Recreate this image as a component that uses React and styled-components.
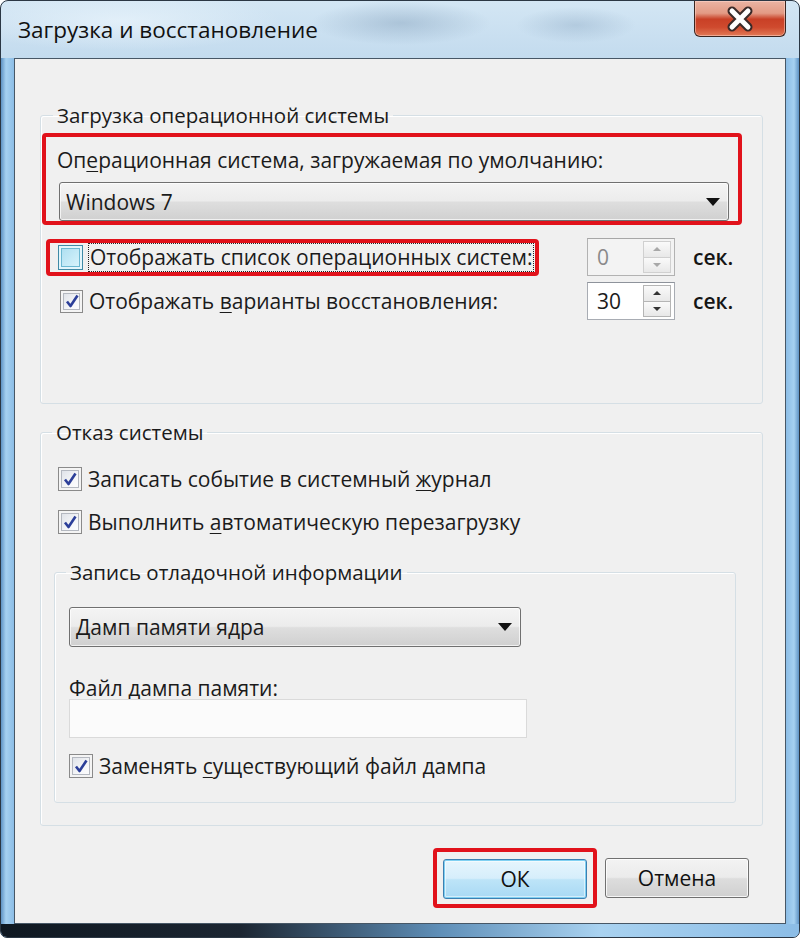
import React from "react";
import styled, { createGlobalStyle } from "styled-components";

const GlobalStyle = createGlobalStyle`
  html, body {
    margin: 0;
    padding: 0;
    background: #ffffff;
  }
  body {
    font-family: "Open Sans", "Liberation Sans", sans-serif;
    color: #1b1b1b;
  }
`;

const Window = styled.div`
  width: 800px;
  height: 938px;
  box-sizing: border-box;
  border: 1px solid #2b3744;
  border-radius: 8px 8px 7px 7px;
  overflow: hidden;
  display: flex;
  flex-direction: column;
  background:
    radial-gradient(ellipse 90px 22px at 400px 22px, rgba(110, 140, 170, 0.35), transparent),
    radial-gradient(ellipse 60px 18px at 575px 24px, rgba(120, 150, 180, 0.3), transparent),
    radial-gradient(ellipse 160px 30px at 120px 20px, rgba(235, 245, 252, 0.7), transparent),
    linear-gradient(to bottom, #d3e6f4 0, #c3dbee 57px, transparent 57px),
    linear-gradient(to right, #5f93c4 0, #a6d1f1 5px, #8cbde6 13px, #8cbde6 785px, #a6d1f1 793px, #5f93c4 100%);
`;

const TitleBar = styled.div`
  height: 57px;
  flex-shrink: 0;
  display: flex;
  justify-content: space-between;
  align-items: flex-start;
  padding-left: 17px;
`;

const Title = styled.div`
  margin-top: 18px;
  font-size: 22.5px;
  line-height: 22px;
  color: #111;
`;

const CloseButton = styled.div`
  width: 92px;
  height: 36px;
  margin-right: 13px;
  box-sizing: border-box;
  border: 1px solid #3b2520;
  border-top: none;
  border-radius: 0 0 6px 6px;
  display: flex;
  align-items: center;
  justify-content: center;
  background: linear-gradient(
    to bottom,
    #eab4a3 0%,
    #e39a84 35%,
    #c94026 52%,
    #cf4a2e 75%,
    #e27a56 100%
  );
  box-shadow: inset 0 0 0 1px rgba(255, 220, 210, 0.5);
`;

const Client = styled.div`
  height: 866px;
  margin: 0 13px;
  box-sizing: border-box;
  border: 1px solid #475766;
  background: #f0f0f0;
  padding: 42px 22px 0 25px;
  display: flex;
  flex-direction: column;
`;

const BottomEdge = styled.div`
  height: 13px;
  flex-shrink: 0;
  background: linear-gradient(
    to right,
    #0f1821 0,
    #1c2632 30%,
    #5f8fb8 55%,
    #a9d2f0 75%,
    #8cbde6 100%
  );
`;

const Group = styled.fieldset`
  margin: ${(p) => p.$margin || "0"};
  padding: ${(p) => p.$padding || "0"};
  min-width: 0;
  border: 1px solid #d5dfe5;
  border-radius: 3px;
  box-shadow: inset 1px 1px 0 #ffffff;
  display: flex;
  flex-direction: column;
  align-items: flex-start;
`;

const Legend = styled.legend`
  margin-left: ${(p) => p.$offset || 12}px;
  padding: 0 4px;
  font-size: 20.5px;
  line-height: 28px;
  color: #1b1b1b;
`;

const Text = styled.span`
  font-size: 21px;
  line-height: 28px;
  white-space: nowrap;
`;

const Key = styled.u`
  text-decoration-thickness: 1px;
  text-underline-offset: 3px;
`;

const Highlight = styled.div`
  box-sizing: border-box;
  border: 4px solid #e1121b;
  border-radius: 4px;
  width: ${(p) => p.$width}px;
  margin: ${(p) => p.$margin || "0"};
  padding: ${(p) => p.$padding || "0"};
  display: flex;
  flex-direction: ${(p) => (p.$column ? "column" : "row")};
  align-items: ${(p) => (p.$column ? "flex-start" : "center")};
`;

const Combo = styled.div`
  box-sizing: border-box;
  width: ${(p) => p.$width}px;
  height: ${(p) => p.$height}px;
  margin: ${(p) => p.$margin || "0"};
  border: 1px solid #707070;
  border-radius: 3px;
  padding: 0 8px 0 6px;
  display: flex;
  align-items: center;
  justify-content: space-between;
  background: linear-gradient(
    to bottom,
    #f4f4f4 0%,
    #ececec 48%,
    #dedede 52%,
    #d0d0d0 100%
  );
  box-shadow: inset 0 0 0 1px rgba(255, 255, 255, 0.7);
`;

const ComboArrow = styled.span`
  width: 0;
  height: 0;
  border-left: 7px solid transparent;
  border-right: 7px solid transparent;
  border-top: 8px solid #111;
`;

const Box = styled.span`
  box-sizing: border-box;
  flex-shrink: 0;
  width: ${(p) => p.$size || 24}px;
  height: ${(p) => p.$size || 24}px;
  margin-left: ${(p) => p.$left || 0}px;
  display: flex;
  align-items: center;
  justify-content: center;
  border: 1px solid ${(p) => (p.$checked ? "#8a8a8a" : "#3f8aa6")};
  background: ${(p) =>
    p.$checked
      ? "linear-gradient(135deg, #d9dde4 0%, #f6f7f9 60%, #ffffff 100%)"
      : "linear-gradient(135deg, #a9dcef 0%, #c8ecf8 60%, #dff5fc 100%)"};
  box-shadow: ${(p) =>
    p.$checked
      ? "inset 0 0 0 2px #f4f4f4, inset 0 0 0 3px #b4b8c0"
      : "inset 0 0 0 2px #e3f6fc, inset 0 0 0 3px #6cb8d2"};
`;

const FocusText = styled(Text)`
  margin-left: 5px;
  padding: 0 1px;
  border: 1px dotted #222;
  line-height: 27px;
`;

const CheckLabel = styled(Text)`
  margin-left: ${(p) => p.$gap || 6}px;
`;

const TimerRow = styled.div`
  display: grid;
  grid-template-columns: 546px 88px auto;
  align-items: center;
  height: ${(p) => p.$height}px;
  margin-top: ${(p) => p.$top || 0}px;
`;

const CheckRow = styled.div`
  display: flex;
  align-items: center;
  height: ${(p) => p.$height || 36}px;
  margin-top: ${(p) => p.$top || 0}px;
  padding-left: ${(p) => p.$left || 0}px;
`;

const Spinner = styled.div`
  box-sizing: border-box;
  width: 88px;
  height: 38px;
  border: 1px solid ${(p) => (p.$disabled ? "#b2b2b2" : "#a8acb3")};
  border-top-color: ${(p) => (p.$disabled ? "#a7a7a7" : "#8e939b")};
  background: ${(p) => (p.$disabled ? "#f3f3f3" : "#ffffff")};
  display: flex;
  align-items: stretch;
  margin-left: ${(p) => p.$left || 0}px;
`;

const SpinValue = styled.span`
  flex: 1;
  padding-left: 9px;
  font-size: 21px;
  line-height: 36px;
  color: ${(p) => (p.$disabled ? "#8a8a8a" : "#1b1b1b")};
`;

const SpinButtons = styled.div`
  width: 28px;
  margin: 2px 3px 2px 0;
  display: flex;
  flex-direction: column;
`;

const SpinHalf = styled.div`
  flex: 1;
  box-sizing: border-box;
  border: 1px solid ${(p) => (p.$disabled ? "#d0d0d0" : "#b5b5b5")};
  border-top: ${(p) => (p.$down ? "none" : undefined)};
  background: linear-gradient(to bottom, #fafafa, #e8e8e8);
  display: flex;
  align-items: center;
  justify-content: center;
`;

const SpinArrow = styled.span`
  width: 0;
  height: 0;
  border-left: 4px solid transparent;
  border-right: 4px solid transparent;
  ${(p) =>
    p.$down
      ? `border-top: 4px solid ${p.$disabled ? "#a8a8a8" : "#333"};`
      : `border-bottom: 4px solid ${p.$disabled ? "#a8a8a8" : "#333"};`}
`;

const Unit = styled(Text)`
  margin-left: 18px;
  font-weight: 600;
  color: #151515;
`;

const FieldLabel = styled.div`
  margin: 30px 0 0 14px;
  font-size: 21px;
  line-height: 22px;
`;

const FieldInput = styled.div`
  box-sizing: border-box;
  width: 458px;
  height: 39px;
  margin-left: 14px;
  border: 1px solid #dadada;
  background: #fbfbfb;
`;

const ButtonRow = styled.div`
  display: flex;
  justify-content: flex-end;
  align-items: center;
  gap: 8px;
  margin-top: 22px;
  padding-right: 14px;
`;

const Button = styled.button`
  box-sizing: border-box;
  width: 144px;
  height: 40px;
  padding: 0;
  font-family: inherit;
  font-size: 21px;
  color: #111;
  border-radius: 3px;
  border: 1px solid ${(p) => (p.$primary ? "#3c7fb1" : "#707070")};
  background: ${(p) =>
    p.$primary
      ? "linear-gradient(to bottom, #e6f5fd 0%, #d6eefb 48%, #bde4f8 52%, #a8d9f4 100%)"
      : "linear-gradient(to bottom, #f3f3f3 0%, #ebebeb 48%, #dddddd 52%, #d0d0d0 100%)"};
  box-shadow: ${(p) =>
    p.$primary
      ? "inset 0 0 0 1px #7fd0f2, inset 0 0 0 2px rgba(255,255,255,0.5)"
      : "inset 0 0 0 1px rgba(255,255,255,0.8)"};
`;

const Check = ({ checked, size, left }) => (
  <Box $checked={checked} $size={size} $left={left}>
    {checked && (
      <svg width="16" height="16" viewBox="0 0 16 16">
        <path
          d="M3 8.5 L6.5 13 L13.5 2.5"
          fill="none"
          stroke="#2c3f99"
          strokeWidth="2.6"
          strokeLinejoin="round"
        />
      </svg>
    )}
  </Box>
);

const Spin = ({ value, disabled }) => (
  <Spinner $disabled={disabled}>
    <SpinValue $disabled={disabled}>{value}</SpinValue>
    <SpinButtons>
      <SpinHalf $disabled={disabled}>
        <SpinArrow $disabled={disabled} />
      </SpinHalf>
      <SpinHalf $disabled={disabled} $down>
        <SpinArrow $disabled={disabled} $down />
      </SpinHalf>
    </SpinButtons>
  </Spinner>
);

const App = () => {
  return (
    <>
      <GlobalStyle />
      <Window>
        <TitleBar>
          <Title>Загрузка и восстановление</Title>
          <CloseButton>
            <svg width="32" height="26" viewBox="0 0 32 26">
              <path
                d="M8 5 L24 21 M24 5 L8 21"
                stroke="#3a2a28"
                strokeWidth="9"
                strokeLinecap="round"
              />
              <path
                d="M8 5 L24 21 M24 5 L8 21"
                stroke="#ffffff"
                strokeWidth="5"
                strokeLinecap="round"
              />
            </svg>
          </CloseButton>
        </TitleBar>

        <Client>
          <Group $padding="0 0 82px 0">
            <Legend>Загрузка операционной системы</Legend>
            <Highlight $width={700} $margin="4px 0 0 1px" $padding="9px 9px 0 11px" $column>
              <Text>
                Оп<Key>е</Key>рационная система, загружаемая по умолчанию:
              </Text>
              <Combo $width={670} $height={39} $margin="8px 0 0 2px">
                <Text>Windows 7</Text>
                <ComboArrow />
              </Combo>
            </Highlight>

            <TimerRow $height={48} $top={8}>
              <Highlight $width={493} $margin="0 0 0 5px" $padding="0 0 0 8px">
                <Box $checked={false} $size={25} />
                <FocusText>Отображать список операционных систем:</FocusText>
              </Highlight>
              <Spin value="0" disabled />
              <Unit>сек.</Unit>
            </TimerRow>

            <TimerRow $height={40}>
              <CheckRow $height={40} $left={19}>
                <Check checked size={23} />
                <CheckLabel>
                  Отображать <Key>в</Key>арианты восстановления:
                </CheckLabel>
              </CheckRow>
              <Spin value="30" />
              <Unit>сек.</Unit>
            </TimerRow>
          </Group>

          <Group $margin="14px 0 0 0" $padding="0 0 22px 0">
            <Legend $offset={11}>Отказ системы</Legend>
            <CheckRow $top={15} $left={17}>
              <Check checked size={24} />
              <CheckLabel>
                Записать событие в системный <Key>ж</Key>урнал
              </CheckLabel>
            </CheckRow>
            <CheckRow $top={7} $left={17}>
              <Check checked size={24} />
              <CheckLabel>
                Выполнить <Key>а</Key>втоматическую перезагрузку
              </CheckLabel>
            </CheckRow>

            <Group $margin="18px 0 0 13px" $padding="0 0 21px 0" style={{ width: 680 }}>
              <Legend $offset={11}>Запись отладочной информации</Legend>
              <Combo $width={452} $height={40} $margin="21px 0 0 14px">
                <Text>Дамп памяти ядра</Text>
                <ComboArrow />
              </Combo>
              <FieldLabel>
                <Key>Ф</Key>айл дампа памяти:
              </FieldLabel>
              <FieldInput />
              <CheckRow $height={30} $top={13} $left={14}>
                <Check checked size={24} />
                <CheckLabel>
                  Заменять <Key>с</Key>уществующий файл дампа
                </CheckLabel>
              </CheckRow>
            </Group>
          </Group>

          <ButtonRow>
            <Highlight $width={164} $padding="7px 6px 5px 6px">
              <Button $primary>ОК</Button>
            </Highlight>
            <Button>Отмена</Button>
          </ButtonRow>
        </Client>
        <BottomEdge />
      </Window>
    </>
  );
};

export default App;
